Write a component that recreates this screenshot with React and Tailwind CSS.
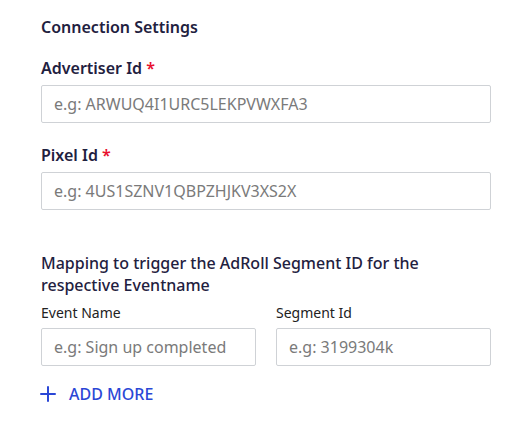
import { Plus } from 'lucide-react'

const inputCls =
    'w-full h-[38px] px-3 border border-[#cfd2d6] rounded-[2px] bg-white text-[16px] text-[#333] placeholder:text-[#7a7a7a] outline-none'

function Label({ children, required }) {
    return (
        <label className="block text-[16px] font-semibold text-[#1f2140] leading-[22px] mb-[6px]">
            {children}
            {required && <span className="text-[#e8102d] ml-1">*</span>}
        </label>
    )
}

export default function App() {
    return (
        <div className="bg-white w-[529px] h-[430px] pl-[41px] pr-[38px] pt-[16px]" style={{ fontFamily: '"Noto Sans", sans-serif' }}>
            <h2 className="text-[16px] font-semibold text-[#1f2140] leading-[22px]">Connection Settings</h2>

            <div className="mt-[19px]">
                <Label required>Advertiser Id</Label>
                <input className={inputCls} placeholder="e.g: ARWUQ4I1URC5LEKPVWXFA3" />
            </div>

            <div className="mt-[21px]">
                <Label required>Pixel Id</Label>
                <input className={inputCls} placeholder="e.g: 4US1SZNV1QBPZHJKV3XS2X" />
            </div>

            <p className="mt-[42px] text-[16px] font-medium text-[#1f2140] leading-[22px] pr-[50px]">
                Mapping to trigger the AdRoll Segment ID for the respective Eventname
            </p>

            <div className="mt-[7px] grid grid-cols-2 gap-x-[20px]">
                <div>
                    <div className="text-[14px] text-[#222] leading-[20px] mb-[5px]">Event Name</div>
                    <input className={inputCls} placeholder="e.g: Sign up completed" />
                </div>
                <div>
                    <div className="text-[14px] text-[#222] leading-[20px] mb-[5px]">Segment Id</div>
                    <input className={inputCls} placeholder="e.g: 3199304k" />
                </div>
            </div>

            <button className="mt-[16px] flex items-center gap-[9px] text-[#2b47d6] text-[16px] font-medium">
                <Plus size={24} strokeWidth={2} className="-ml-[5px]" />
                ADD MORE
            </button>
        </div>
    )
}
